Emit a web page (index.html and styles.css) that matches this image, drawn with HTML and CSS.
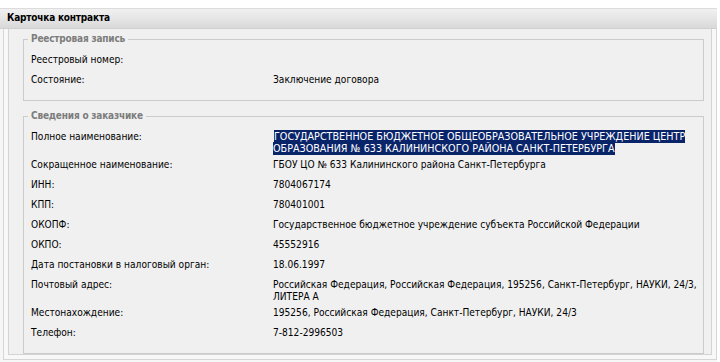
FILE: index.html
```html
<!DOCTYPE html>
<html lang="ru">
<head>
<meta charset="utf-8">
<title>Карточка контракта</title>
<link rel="stylesheet" href="styles.css">
</head>
<body>
<div class="card">
  <div class="card-header">Карточка контракта</div>
  <div class="card-body">
    <div class="frame">
      <div class="content">
        <fieldset class="group">
          <legend>Реестровая запись</legend>
          <div class="rows">
            <div class="row"><div class="label">Реестровый номер:</div><div class="value"></div></div>
            <div class="row"><div class="label">Состояние:</div><div class="value">Заключение договора</div></div>
          </div>
        </fieldset>
        <fieldset class="group group-second">
          <legend>Сведения о заказчике</legend>
          <div class="rows">
            <div class="row"><div class="label">Полное наименование:</div><div class="value"><span class="selected">ГОСУДАРСТВЕННОЕ БЮДЖЕТНОЕ ОБЩЕОБРАЗОВАТЕЛЬНОЕ УЧРЕЖДЕНИЕ ЦЕНТР<br>ОБРАЗОВАНИЯ № 633 КАЛИНИНСКОГО РАЙОНА САНКТ-ПЕТЕРБУРГА</span></div></div>
            <div class="row"><div class="label">Сокращенное наименование:</div><div class="value">ГБОУ ЦО № 633 Калининского района Санкт-Петербурга</div></div>
            <div class="row"><div class="label">ИНН:</div><div class="value">7804067174</div></div>
            <div class="row"><div class="label">КПП:</div><div class="value">780401001</div></div>
            <div class="row"><div class="label">ОКОПФ:</div><div class="value">Государственное бюджетное учреждение субъекта Российской Федерации</div></div>
            <div class="row"><div class="label">ОКПО:</div><div class="value">45552916</div></div>
            <div class="row"><div class="label">Дата постановки в налоговый орган:</div><div class="value">18.06.1997</div></div>
            <div class="row"><div class="label">Почтовый адрес:</div><div class="value">Российская Федерация, Российская Федерация, 195256, Санкт-Петербург, НАУКИ, 24/3,<br>ЛИТЕРА А</div></div>
            <div class="row"><div class="label">Местонахождение:</div><div class="value">195256, Российская Федерация, Санкт-Петербург, НАУКИ, 24/3</div></div>
            <div class="row"><div class="label">Телефон:</div><div class="value">7-812-2996503</div></div>
          </div>
        </fieldset>
      </div>
    </div>
  </div>
</div>
</body>
</html>
```

FILE: styles.css
```css
html, body {
  margin: 0;
  padding: 0;
  background: #ffffff;
}

body {
  font-family: "DejaVu Sans Condensed", "DejaVu Sans", sans-serif;
  font-size: 10.1px;
  color: #000000;
  padding-top: 8px;
}

.card {
  width: 717px;
  border-top: 1px solid #dcdcdc;
}

.card-header {
  height: 19px;
  line-height: 18px;
  padding-left: 7px;
  font-weight: bold;
  font-size: 10px;
  letter-spacing: -0.2px;
  background: linear-gradient(#f1f1f1, #d9d9d9);
  border-bottom: 1px solid #d0d0d0;
}

.card-body {
  background: #f6f6f6;
  padding: 0 0 5px 3px;
}

.frame {
  border-left: 1px solid #d6d6d6;
  border-right: 1px solid #d6d6d6;
  border-bottom: 1px solid #d6d6d6;
  background: #f8f8f8;
  padding: 0 4px 4px 4px;
}

.content {
  background: #f0f0f0;
  border-left: 1px solid #d4d4d4;
  border-right: 1px solid #d4d4d4;
  border-bottom: 1px solid #d4d4d4;
  padding: 4px 7px 0 14px;
}

.group {
  margin: 0;
  padding: 0 7px 8px 7px;
  border: 1px solid #cbcbcb;
  min-width: 0;
}

.group-second {
  margin-top: 9px;
}

.group legend {
  margin-left: -3px;
  padding: 0 3px;
  line-height: 12px;
  font-weight: bold;
  font-size: 10px;
  letter-spacing: -0.2px;
  color: #7d7d7d;
}

.rows {
  padding-top: 7px;
}

.row {
  display: grid;
  grid-template-columns: 242px 1fr;
  padding: 2px 0;
  min-height: 16px;
  line-height: 12px;
}

.value {
  white-space: nowrap;
}

.selected {
  background: #0a246a;
  color: #ffffff;
  margin-left: 1px;
  font-size: 10.7px;
}
```
